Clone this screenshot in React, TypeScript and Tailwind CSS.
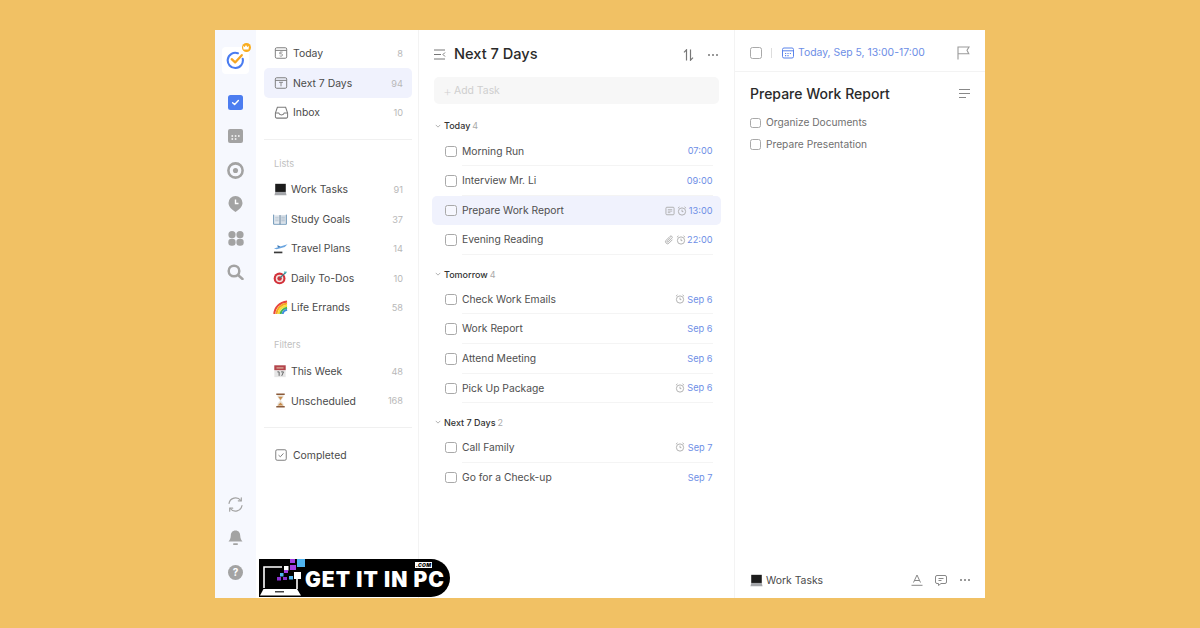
import React from "react";

const FONT = "font-['Inter','Noto_Sans',sans-serif]";

const Check = ({ size = 12 }: { size?: number }) => (
  <span style={{ width: size, height: size }} className="block shrink-0 rounded-[2.5px] border-[1.2px] border-[#a9a9a9] bg-white/40" />
);

const Svg = ({ s = 14, children, className = "" }: { s?: number; children: React.ReactNode; className?: string }) => (
  <svg width={s} height={s} viewBox="0 0 16 16" fill="none" className={"shrink-0 " + className}>{children}</svg>
);

const Laptop = ({ s = 13 }: { s?: number }) => (
  <Svg s={s}>
    <rect x="1.5" y="1" width="13" height="10" fill="#1c1c1c" />
    <path d="M1.500 11h13l1 4H.5z" fill="#a4a6aa" />
  </Svg>
);
const Book = () => (
  <Svg s={14}>
    <path d="M1 3.500h6.600v9.500H1z" fill="#e6ebf1" /><path d="M8.400 3.500H15v9.500H8.400z" fill="#d8e0e8" />
    <path d="M.7 3v11h14.600V3" stroke="#6a93b5" strokeWidth="1.100" /><path d="M8 3.500v10.500" stroke="#4e6f8c" strokeWidth="1" />
    <path d="M2.500 6h4M2.500 8h4M2.500 10h4M9.500 6h4M9.500 8h4M9.500 10h4" stroke="#9aaec0" strokeWidth=".7" />
  </Svg>
);
const Plane = () => (
  <Svg s={15}>
    <path d="M1 8 15.500 3.500l-3 2.900L4 8.800z" fill="#6aa5e0" /><path d="M5.500 6.800 4.300 4.800h1.300l2.500 1.300z" fill="#3b78b5" />
    <path d="M1 12.200h9" stroke="#3a3a3a" strokeWidth="1.800" />
  </Svg>
);
const Dart = () => (
  <Svg s={15}>
    <circle cx="7" cy="9" r="6.300" fill="#d2313a" /><circle cx="7" cy="9" r="4" fill="#f4e4e0" /><circle cx="7" cy="9" r="2.400" fill="#d2313a" />
    <path d="M7 9l6-6" stroke="#3c7f8c" strokeWidth="1.300" /><path d="M11.500 1.500l3.500.4-1.800 2.600z" fill="#45b0b8" />
  </Svg>
);
const Rainbow = () => (
  <Svg s={15}>
    <path d="M1.500 15C1.500 8 7 2.500 15 1.500" stroke="#e8453c" strokeWidth="2.200" /><path d="M3.800 15C3.800 9.500 8 4.800 15 3.800" stroke="#f5a623" strokeWidth="2.200" />
    <path d="M6 15C6 10.500 9.500 7 15 6" stroke="#f7dd3a" strokeWidth="2.200" /><path d="M8.200 15C8.200 12 11 9 15 8.200" stroke="#46b553" strokeWidth="2.200" />
    <path d="M10.400 15C10.400 13 12.500 11 15 10.400" stroke="#3f8fe0" strokeWidth="2" />
  </Svg>
);
const Cal = () => (
  <Svg s={14}>
    <rect x="1.500" y="1.500" width="13" height="13.500" fill="#e6e6e6" /><rect x="1.500" y="1.500" width="13" height="5.500" fill="#b5444c" />
    <path d="M4 4.500h8" stroke="#eec" strokeWidth=".9" /><path d="M5 9h2v4.500M9.300 9h2.700L10 13.500" stroke="#555" strokeWidth="1" />
  </Svg>
);
const Hourglass = () => (
  <Svg s={15}>
    <path d="M3.500 1.300h9M3.500 14.700h9" stroke="#8a5a3a" strokeWidth="1.700" />
    <path d="M4.500 2.500h7c0 3-2.500 4-3 5.500.5 1.500 3 2.500 3 5.500h-7c0-3 2.500-4 3-5.500-.5-1.500-3-2.500-3-5.500z" fill="#e8e2d8" />
    <path d="M5.500 4h5L8 7.500zM5 13.200 8 10l3 3.200z" fill="#c98d4e" />
  </Svg>
);

const I = "#7b7b7b";
const TodayIcon = () => (
  <Svg s={14}>
    <rect x="1.500" y="2" width="13" height="12" rx="1.600" stroke={I} strokeWidth="1.100" /><path d="M1.500 5h13" stroke={I} strokeWidth="1.100" />
    <path d="M9.800 6.900H6.800l-.2 2.200c1.700-.6 3.100 0 3.100 1.200 0 1.300-2 1.700-3.200.9" stroke={I} strokeWidth=".9" />
  </Svg>
);
const NextIcon = () => (
  <Svg s={14}>
    <rect x="1.500" y="2" width="13" height="12" rx="1.600" stroke={I} strokeWidth="1.100" /><path d="M1.500 5h13" stroke={I} strokeWidth="1.100" />
    <path d="M5.700 7.200h4.600M8 7.200v4.600" stroke={I} strokeWidth="1" />
  </Svg>
);
const InboxIcon = () => (
  <Svg s={15}>
    <path d="M3.600 2.500h8.800l2.100 6v4a1.500 1.500 0 0 1-1.500 1.500H3a1.500 1.500 0 0 1-1.500-1.500v-4z" stroke={I} strokeWidth="1.100" />
    <path d="M1.600 8.500H5c.4 1.400 1.500 2.200 3 2.200s2.600-.8 3-2.200h3.400" stroke={I} strokeWidth="1.100" />
  </Svg>
);
const DoneIcon = () => (
  <Svg s={14}>
    <rect x="2" y="2" width="12" height="12" rx="1.600" stroke={I} strokeWidth="1.100" /><path d="M5.200 8.200 7.300 10l3.500-3.800" stroke={I} strokeWidth="1.100" />
  </Svg>
);
const Alarm = () => (
  <Svg s={10}>
    <circle cx="8" cy="8.800" r="5.800" stroke="#a8a8a8" strokeWidth="1.400" /><path d="M8 5.800v3.200h2.200M1.500 3.500 4 1.300M14.500 3.500 12 1.300" stroke="#a8a8a8" strokeWidth="1.400" />
  </Svg>
);
const Note = () => (
  <Svg s={10}>
    <rect x="1.500" y="2" width="13" height="12" rx="1.500" stroke="#a8a8a8" strokeWidth="1.400" /><path d="M4.500 5.800h7M4.500 8.200h7M4.500 10.600h4" stroke="#a8a8a8" strokeWidth="1.200" />
  </Svg>
);
const Clip = () => (
  <Svg s={10}>
    <path d="M13.500 7.500 8 13a3.200 3.200 0 0 1-4.600-4.600L9.600 2.200a2.100 2.100 0 0 1 3 3L6.600 11.100a1 1 0 0 1-1.500-1.500L10.500 4.300" stroke="#a8a8a8" strokeWidth="1.400" />
  </Svg>
);

const Item = ({ icon, label, count, active, gap = "gap-[5px]", pad = "pl-[10px]" }: { icon: React.ReactNode; label: string; count: string; active?: boolean; gap?: string; pad?: string }) => (
  <div className={`flex h-[29.6px] items-center rounded-[5px] pr-[9px] ${pad} ${gap} ${active ? "bg-[#f0f2fd]" : ""}`}>
    <span className="flex w-[14px] shrink-0 justify-center">{icon}</span>
    <span className="flex-1 pt-[1.5px] text-[10.4px] text-[#4a4a4a]">{label}</span>
    <span className="pt-[1.5px] text-[9.2px] text-[#b8b8b8]">{count}</span>
  </div>
);

const Section = ({ name, n }: { name: string; n: string }) => (
  <div className="flex h-[20px] items-center gap-[3px] pb-[1px] pl-[1px] text-[9px]">
    <svg width="6" height="6" viewBox="0 0 8 8" fill="none"><path d="M1 2.500 4 5.500l3-3" stroke="#999" strokeWidth="1" /></svg>
    <span className="font-medium text-[#333]">{name}</span>
    <span className="-ml-[1px] text-[#aaa]">{n}</span>
  </div>
);

const Task = ({ name, time, extra, active, last }: { name: string; time: string; extra?: React.ReactNode; active?: boolean; last?: boolean }) => (
  <div className={`-mx-[2px] flex h-[29.6px] items-center rounded-[5px] pl-[13px] ${active ? "bg-[#f0f2fd]" : ""}`}>
    <Check size={11.500} />
    <div className={`ml-[5.500px] mr-[8.500px] flex h-full flex-1 items-center gap-[1.500px] ${active || last ? "" : "border-b border-[#f4f4f4]"}`}>
      <span className="flex-1 pt-[1px] text-[10.3px] text-[#4f4f4f]">{name}</span>
      {extra}
      <span className="min-w-[24px] pt-[1px] text-right text-[9.200px] text-[#6d8ee6]">{time}</span>
    </div>
  </div>
);

const RailBox = ({ children }: { children: React.ReactNode }) => (
  <div className="flex h-[34px] items-center justify-center">{children}</div>
);

const G = "#a3a3a3";

export default function App() {
  return (
    <div className={`relative h-[628px] w-[1200px] overflow-hidden bg-[#f1c164] pl-[215px] pt-[30px] ${FONT}`}>
      <div className="flex h-[568px] w-[770px] bg-white">
        {/* rail */}
        <div className="flex w-[41px] shrink-0 flex-col items-center bg-[#f6f8fe] pb-[9px] pt-[17px]">
          <div className="relative flex h-[27px] w-[27px] items-center justify-center rounded-[4px] bg-white">
            <svg width="19" height="19" viewBox="0 0 20 20" fill="none">
              <path d="M17.600 8.200A8 8 0 1 1 12.500 2.400" stroke="#4a7cf0" strokeWidth="2.200" strokeLinecap="round" />
              <path d="M6 8.600l3.600 3.400 7-7.600" stroke="#f5a623" strokeWidth="2.400" strokeLinecap="round" strokeLinejoin="round" />
            </svg>
            <span className="absolute -right-[1.500px] -top-[4px] flex h-[9px] w-[9px] items-center justify-center rounded-full bg-[#f9ad1e]">
              <svg width="6" height="5" viewBox="0 0 6 5"><path d="M.5 4.500 0 1l1.700 1L3 0l1.300 2L6 1l-.5 3.500z" fill="#fff" /></svg>
            </span>
          </div>
          <div className="mt-[11px]">
            <RailBox>
              <span className="flex h-[15px] w-[15px] items-center justify-center rounded-[2.500px] bg-[#4c7df0]">
                <svg width="9" height="9" viewBox="0 0 10 10" fill="none"><path d="M1.800 5.200 4 7.200l4.200-4.400" stroke="#fff" strokeWidth="1.600" strokeLinecap="round" strokeLinejoin="round" /></svg>
              </span>
            </RailBox>
            <RailBox>
              <svg width="15" height="14" viewBox="0 0 15 14">
                <rect width="15" height="14" rx="2" fill={G} />
                <path d="M3.500 7h1.600M6.800 7h1.600M10 7h1.600M3.500 10h1.600M6.800 10h1.600" stroke="#fff" strokeWidth="1.300" />
              </svg>
            </RailBox>
            <RailBox>
              <svg width="17" height="17" viewBox="0 0 16 16" fill="none"><circle cx="8" cy="8" r="6.700" stroke={G} strokeWidth="2.400" /><circle cx="8" cy="8" r="2.400" fill={G} /></svg>
            </RailBox>
            <RailBox>
              <svg width="15" height="16" viewBox="0 0 15 16"><path d="M7.500 0a7 7 0 0 1 7 7c0 3.500-3.200 6.600-7 9-3.800-2.400-7-5.500-7-9a7 7 0 0 1 7-7z" fill={G} /><path d="M7.500 3.500v4h3" stroke="#fff" strokeWidth="1.400" fill="none" /></svg>
            </RailBox>
            <RailBox>
              <svg width="16" height="15" viewBox="0 0 16 15" fill={G}><circle cx="4" cy="3.700" r="3.600" /><circle cx="12" cy="3.700" r="3.600" /><rect x=".3" y="7.800" width="7.300" height="7" rx="3.200" /><rect x="8.400" y="7.800" width="7.300" height="7" rx="3.200" /></svg>
            </RailBox>
            <RailBox>
              <svg width="17" height="16" viewBox="0 0 17 16" fill="none"><circle cx="7" cy="7" r="5.300" stroke={G} strokeWidth="2.500" /><path d="m11 11 4.500 4" stroke={G} strokeWidth="2.500" strokeLinecap="round" /></svg>
            </RailBox>
          </div>
          <div className="mt-auto">
            <RailBox>
              <svg width="15" height="15" viewBox="0 0 15 15" fill="none" stroke={G} strokeWidth="1.200" strokeLinecap="round"><path d="M1 6.500A6.600 6.600 0 0 1 12.800 3.500M14 8.500A6.600 6.600 0 0 1 2.200 11.500" /><path d="M13.300 .8v3h-3M1.700 14.200v-3h3" /></svg>
            </RailBox>
            <RailBox>
              <svg width="15" height="16" viewBox="0 0 15 16" fill={G}><path d="M7.500 .5c3 0 4.700 2.200 4.700 5 0 3 1.300 4.700 2.300 6H.5c1-1.300 2.300-3 2.300-6 0-2.800 1.700-5 4.700-5z" /><rect x="5" y="13.200" width="5" height="1.800" rx=".9" /></svg>
            </RailBox>
            <RailBox>
              <span className="flex h-[15px] w-[15px] items-center justify-center rounded-full bg-[#a3a3a3] text-[10px] font-bold leading-none text-white">?</span>
            </RailBox>
          </div>
        </div>

        {/* lists */}
        <div className="w-[163px] shrink-0 border-r border-[#f3f3f3] pl-[8px] pr-[6px] pt-[8.500px]">
          <Item icon={<TodayIcon />} label="Today" count="8" />
          <Item icon={<NextIcon />} label="Next 7 Days" count="94" active />
          <Item icon={<InboxIcon />} label="Inbox" count="10" />
          <div className="mt-[12px] border-t border-[#f0f0f0]" />
          <div className="flex h-[34px] items-end pb-[3px] pl-[10px] text-[9.200px] text-[#c0c0c0]">Lists</div>
          <div>
            <Item icon={<Laptop />} label="Work Tasks" count="91" gap="gap-[4px]" pad="pl-[9px]" />
            <Item icon={<Book />} label="Study Goals" count="37" gap="gap-[4px]" pad="pl-[9px]" />
            <Item icon={<Plane />} label="Travel Plans" count="14" gap="gap-[4px]" pad="pl-[9px]" />
            <Item icon={<Dart />} label="Daily To-Dos" count="10" gap="gap-[4px]" pad="pl-[9px]" />
            <Item icon={<Rainbow />} label="Life Errands" count="58" gap="gap-[4px]" pad="pl-[9px]" />
          </div>
          <div className="flex h-[31px] items-end pb-[1px] pl-[10px] text-[9.200px] text-[#c0c0c0]">Filters</div>
          <div className="mt-[3px]">
            <Item icon={<Cal />} label="This Week" count="48" gap="gap-[4px]" pad="pl-[9px]" />
            <Item icon={<Hourglass />} label="Unscheduled" count="168" gap="gap-[4px]" pad="pl-[9px]" />
          </div>
          <div className="mt-[12px] border-t border-[#f0f0f0]" />
          <div className="mt-[12px]">
            <div className="flex h-[29.600px] items-center gap-[5px] pl-[10px]">
              <DoneIcon />
              <span className="pt-[1px] text-[10.400px] text-[#4a4a4a]">Completed</span>
            </div>
          </div>
        </div>

        {/* tasks */}
        <div className="w-[316px] shrink-0 border-r border-[#f3f3f3] px-[15px]">
          <div className="flex h-[47px] items-center pt-[2px]">
            <svg width="12" height="11" viewBox="0 0 12 11" fill="none" stroke="#777" strokeWidth="1"><path d="M0 1h11M0 5.500h7M0 10h11M11 3.500 9 5.500l2 2" /></svg>
            <span className="ml-[8px] flex-1 text-[14.600px] font-medium text-[#2a2a2a]">Next 7 Days</span>
            <svg width="11" height="12" viewBox="0 0 11 12" fill="none" stroke="#777" strokeWidth="1.200"><path d="M3.500 11.500V.8L1 3.300M7.500 .5v10.700L10 8.700" /></svg>
            <span className="ml-[14px] mr-[1px] flex gap-[2px]"><i className="h-[2px] w-[2px] rounded-full bg-[#777]" /><i className="h-[2px] w-[2px] rounded-full bg-[#777]" /><i className="h-[2px] w-[2px] rounded-full bg-[#777]" /></span>
          </div>
          <div className="flex h-[27px] items-center rounded-[5px] bg-[#f7f7f7] pl-[9px] pt-[1px] text-[10.400px] text-[#cfcfcf]">
            <span className="mr-[2px] -mt-[1px] text-[14px] font-extralight leading-none">+</span>Add Task
          </div>
          <div className="mt-[12.600px]"><Section name="Today" n="4" /></div>
          <div>
            <Task name="Morning Run" time="07:00" />
            <Task name="Interview Mr. Li" time="09:00" />
            <Task name="Prepare Work Report" time="13:00" active extra={<span className="flex gap-[2px]"><Note /><Alarm /></span>} />
            <Task name="Evening Reading" time="22:00" extra={<span className="flex gap-[2px]"><Clip /><Alarm /></span>} />
          </div>
          <div className="mt-[9.800px]"><Section name="Tomorrow" n="4" /></div>
          <div>
            <Task name="Check Work Emails" time="Sep 6" extra={<span className="mr-[1px] flex"><Alarm /></span>} />
            <Task name="Work Report" time="Sep 6" />
            <Task name="Attend Meeting" time="Sep 6" />
            <Task name="Pick Up Package" time="Sep 6" extra={<span className="mr-[1px] flex"><Alarm /></span>} />
          </div>
          <div className="mt-[9.800px]"><Section name="Next 7 Days" n="2" /></div>
          <div>
            <Task name="Call Family" time="Sep 7" extra={<span className="mr-[1px] flex"><Alarm /></span>} />
            <Task name="Go for a Check-up" time="Sep 7" last />
          </div>
        </div>

        {/* detail */}
        <div className="flex min-w-0 flex-1 flex-col">
          <div className="flex h-[42px] shrink-0 items-center border-b border-[#f3f3f3] px-[15px] pt-[4px]">
            <Check size={12} />
            <span className="ml-[9px] h-[10px] w-px bg-[#ddd]" />
            <svg className="ml-[10px]" width="12" height="12" viewBox="0 0 12 12" fill="none" stroke="#5b84ea"><rect x=".5" y="1" width="11" height="10" rx="1.500" /><path d="M.5 3.800h11" /><path d="M3 6.500h1.200M5.400 6.500h1.200M7.800 6.500h1.200M3 8.600h1.200M5.400 8.600h1.200" strokeWidth="1.100" /></svg>
            <span className="ml-[4px] flex-1 text-[10.400px] text-[#6d8ee6]">Today, Sep 5, 13:00-17:00</span>
            <svg width="13" height="14" viewBox="0 0 13 14" fill="none" stroke="#9a9a9a" strokeWidth="1.100"><path d="M1 13.500V1h11L10 4.200 11.800 7.700H1" /></svg>
          </div>
          <div className="flex h-[40px] shrink-0 items-center px-[15px] pt-[2px]">
            <span className="flex-1 text-[14px] font-medium text-[#2a2a2a]">Prepare Work Report</span>
            <svg width="11" height="9" viewBox="0 0 11 9" stroke="#888"><path d="M0 .5h11M0 4.500h11M0 8.500h7" /></svg>
          </div>
          <div className="pl-[15px]">
            <div className="flex h-[21.500px] items-center gap-[5.500px] text-[10.200px] text-[#707070]"><Check size={10.500} />Organize Documents</div>
            <div className="flex h-[21.500px] items-center gap-[5.500px] text-[10.200px] text-[#707070]"><Check size={10.500} />Prepare Presentation</div>
          </div>
          <div className="mt-auto flex h-[36px] shrink-0 items-center px-[15px]">
            <Laptop s={13} />
            <span className="ml-[3px] flex-1 pt-[1px] text-[10.400px] text-[#4a4a4a]">Work Tasks</span>
            <svg width="12" height="12" viewBox="0 0 12 12" fill="none" stroke="#888"><path d="M2.500 8.500 6 1l3.500 7.500M3.500 6.500h5M.5 11.300h11" /></svg>
            <svg className="ml-[12px]" width="12" height="11" viewBox="0 0 12 11" fill="none" stroke="#888"><path d="M2 .5h8A1.500 1.500 0 0 1 11.500 2v5A1.500 1.500 0 0 1 10 8.500H6L3.500 10.500v-2H2A1.500 1.500 0 0 1 .5 7V2A1.500 1.500 0 0 1 2 .5zM3.500 3.500h5M3.500 5.500h3" /></svg>
            <span className="ml-[13px] flex gap-[2px]"><i className="h-[2px] w-[2px] rounded-full bg-[#777]" /><i className="h-[2px] w-[2px] rounded-full bg-[#777]" /><i className="h-[2px] w-[2px] rounded-full bg-[#777]" /></span>
          </div>
        </div>
      </div>

      {/* watermark badge */}
      <div className="absolute left-[259px] top-[559px] h-[38px] w-[191px] overflow-hidden rounded-r-[19px] bg-black">
        <svg className="absolute left-0 top-0" width="48" height="38" viewBox="0 0 48 38" fill="none">
          <path d="M5 29V8h18" stroke="#fff" strokeWidth="1.600" />
          <path d="M1 36.500l3.500-6.500h33.500l4 6.500z" fill="#fff" />
          <rect x="16" y="32" width="9" height="1.500" fill="#444" />
          <rect x="38" y="0" width="8" height="8" fill="#4fb4f0" />
          <rect x="31" y="0" width="5" height="4" fill="#a23ee0" />
          <rect x="31" y="6" width="6" height="5" fill="#a23ee0" />
          <rect x="25" y="7" width="4.500" height="4.500" fill="#fff" />
          <rect x="25" y="11" width="4" height="3" fill="#a23ee0" />
          <rect x="35" y="13" width="7" height="7" fill="#fff" />
          <rect x="21" y="14" width="3.500" height="3.500" fill="#4fb4f0" />
          <rect x="30" y="17" width="4" height="3.500" fill="#4fb4f0" />
          <rect x="18" y="18" width="4" height="3.500" fill="#8a30d0" />
          <rect x="24" y="18" width="4" height="3" fill="#8a30d0" />
          <path d="M38 20v10" stroke="#fff" strokeWidth="1.600" />
        </svg>
        <span className="absolute left-[156px] top-[2.500px] bg-white px-[1px] text-[5px] font-black italic leading-[6px] tracking-[0.3px] text-black">.COM</span>
        <span className="absolute left-[46px] top-[12.500px] whitespace-nowrap font-['Inter',sans-serif] text-[21px] font-black leading-[16px] tracking-[1px] text-white">GET IT IN PC</span>
      </div>
    </div>
  );
}
